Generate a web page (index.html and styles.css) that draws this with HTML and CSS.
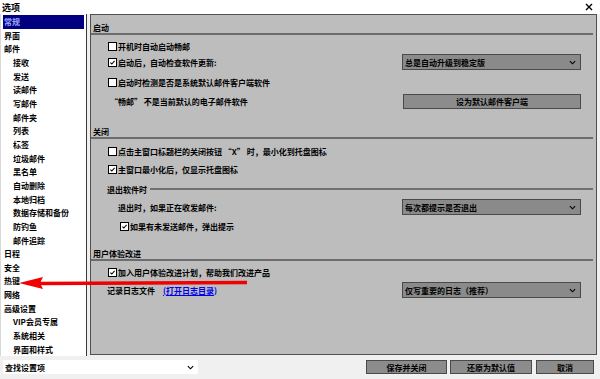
FILE: index.html
```html
<!DOCTYPE html>
<html lang="zh-CN">
<head>
  <meta charset="utf-8"/>
  <title>选项</title>
  <link rel="stylesheet" href="styles.css">
</head>
<body>
  <div class="titlebar">
    <span>选项</span>
    <svg class="close" width="8" height="8" viewBox="0 0 8 8"><path d="M1 1L7 7M7 1L1 7" stroke="#000" stroke-width="1.4"/></svg>
  </div>

  <div class="main">
    <ul class="nav">
      <li class="active">常规</li>
      <li>界面</li>
      <li>邮件</li>
      <li class="sub">接收</li>
      <li class="sub">发送</li>
      <li class="sub">读邮件</li>
      <li class="sub">写邮件</li>
      <li class="sub">邮件夹</li>
      <li class="sub">列表</li>
      <li class="sub">标签</li>
      <li class="sub">垃圾邮件</li>
      <li class="sub">黑名单</li>
      <li class="sub">自动删除</li>
      <li class="sub">本地归档</li>
      <li class="sub">数据存储和备份</li>
      <li class="sub">防钓鱼</li>
      <li class="sub">邮件追踪</li>
      <li>日程</li>
      <li>安全</li>
      <li>热键</li>
      <li>网络</li>
      <li>高级设置</li>
      <li class="sub">VIP会员专属</li>
      <li class="sub">系统相关</li>
      <li class="sub">界面和样式</li>
    </ul>

    <div class="panel">
      <div class="sec-head first">启动</div>
      <div class="row mt3"><span class="cb"></span>开机时自动启动畅邮</div>
      <div class="row">
        <span class="cb checked"><svg viewBox="0 0 9 9"><path d="M1.8 4.6L3.6 6.4L7.2 2.4" fill="none" stroke="#000" stroke-width="1.3"/></svg></span>启动后，自动检查软件更新:
        <div class="select"><span>总是自动升级到稳定版</span><svg viewBox="0 0 8 5"><path d="M1 1L4 4L7 1" fill="none" stroke="#000" stroke-width="1.3"/></svg></div>
      </div>
      <div class="row mt4"><span class="cb"></span>启动时检测是否是系统默认邮件客户端软件</div>
      <div class="row mt3 plain">
        “畅邮” 不是当前默认的电子邮件软件
        <div class="btn wide">设为默认邮件客户端</div>
      </div>

      <div class="sec-head second">关闭</div>
      <div class="row mt4"><span class="cb"></span>点击主窗口标题栏的关闭按钮 “X” 时，最小化到托盘图标</div>
      <div class="row mt2"><span class="cb checked"><svg viewBox="0 0 9 9"><path d="M1.8 4.6L3.6 6.4L7.2 2.4" fill="none" stroke="#000" stroke-width="1.3"/></svg></span>主窗口最小化后，仅显示托盘图标</div>

      <div class="sub-head">退出软件时</div>
      <div class="row mt4 deep">
        退出时，如果正在收发邮件:
        <div class="select"><span>每次都提示是否退出</span><svg viewBox="0 0 8 5"><path d="M1 1L4 4L7 1" fill="none" stroke="#000" stroke-width="1.3"/></svg></div>
      </div>
      <div class="row mt3 deep-cb"><span class="cb checked"><svg viewBox="0 0 9 9"><path d="M1.8 4.6L3.6 6.4L7.2 2.4" fill="none" stroke="#000" stroke-width="1.3"/></svg></span>如果有未发送邮件，弹出提示</div>

      <div class="sec-head third">用户体验改进</div>
      <div class="row mt3"><span class="cb checked"><svg viewBox="0 0 9 9"><path d="M1.8 4.6L3.6 6.4L7.2 2.4" fill="none" stroke="#000" stroke-width="1.3"/></svg></span>加入用户体验改进计划，帮助我们改进产品</div>
      <div class="row mt2 log">
        记录日志文件<a class="link" href="#">(打开日志目录)</a>
        <div class="select"><span>仅写重要的日志（推荐）</span><svg viewBox="0 0 8 5"><path d="M1 1L4 4L7 1" fill="none" stroke="#000" stroke-width="1.3"/></svg></div>
      </div>
    </div>
  </div>

  <div class="footer">
    <div class="search">
      <span>查找设置项</span>
      <svg viewBox="0 0 8 5"><path d="M1 1L4 4L7 1" fill="none" stroke="#000" stroke-width="1.3"/></svg>
    </div>
    <div class="actions">
      <div class="btn save">保存并关闭</div>
      <div class="btn reset">还原为默认值</div>
      <div class="btn cancel">取消</div>
    </div>
  </div>

  <!-- annotation arrow drawn over the window -->
  <svg class="arrow" width="600" height="379" viewBox="0 0 600 379">
    <line x1="38" y1="283.5" x2="247" y2="282.5" stroke="#f00000" stroke-width="3.5"/>
    <polygon points="19,283 43,277 40,283 43,289" fill="#f00000"/>
  </svg>
</body>
</html>
```

FILE: styles.css
```css
* {
  box-sizing: border-box;
}
body {
  margin: 0;
  width: 600px;
  height: 379px;
  overflow: hidden;
  position: relative;
  background-color: #f0f0f0;
  font-family: "Noto Sans CJK SC", "Noto Sans", sans-serif;
  font-size: 8px;
  font-weight: bold;
  color: #000;
}
.titlebar {
  height: 14px;
  background-color: #fff;
  display: flex;
  justify-content: space-between;
  align-items: center;
  padding: 0 7px 0 2px;
  font-size: 9px;
}
.close {
  width: 8px;
  height: 8px;
}
.main {
  display: flex;
  height: 342px;
}
.nav {
  width: 87px;
  margin: 0;
  padding: 1px 2px 0;
  list-style: none;
  background-color: #fff;
  border-left: 1px solid #d8d8d8;
  border-right: 1px solid #3a3a3a;
}
.nav li {
  height: 13.67px;
  line-height: 13.67px;
  padding-left: 1px;
  white-space: nowrap;
}
.nav li.sub {
  padding-left: 10px;
}
.nav li.active {
  background-color: #000080;
  color: #9fa8ff;
}
.panel {
  flex: 1;
  margin: 0 3px 1px 3px;
  border: 1px solid #505050;
  background-color: #bdbdbd;
}
.sec-head {
  height: 13px;
  line-height: 11px;
  margin-right: 3px;
  padding-left: 2px;
  border-bottom: 2px solid #6c6c6c;
}
.sec-head.first {
  margin-top: 7px;
}
.sec-head.second {
  margin-top: 17px;
}
.sec-head.third {
  margin-top: 14px;
}
.sub-head {
  display: flex;
  align-items: center;
  height: 12px;
  margin: 6px 3px 0 0;
  padding-left: 16px;
}
.sub-head::after {
  content: "";
  flex: 1;
  margin-left: 3px;
  border-top: 2px solid #707070;
}
.row {
  display: flex;
  align-items: center;
  height: 16px;
  padding-left: 17px;
  white-space: nowrap;
}
.row.plain {
  padding-left: 19px;
}
.row.deep {
  padding-left: 27px;
}
.row.deep-cb {
  padding-left: 29px;
}
.row.log {
  padding-left: 16px;
}
.mt2 {
  margin-top: 2px;
}
.mt3 {
  margin-top: 3px;
}
.mt4 {
  margin-top: 4px;
}
.cb {
  width: 9px;
  height: 9px;
  margin-right: 1px;
  border: 1px solid #000;
  background-color: #fff;
  display: flex;
}
.cb svg {
  width: 7px;
  height: 7px;
}
.select {
  margin-left: auto;
  margin-right: 15px;
  width: 179px;
  height: 16px;
  display: flex;
  align-items: center;
  justify-content: space-between;
  padding: 0 4px 0 2px;
  background-color: #8a8a8a;
  border: 1px solid #4a4a4a;
}
.select svg {
  width: 7px;
  height: 5px;
}
.btn {
  height: 15px;
  display: flex;
  align-items: center;
  justify-content: center;
  background-color: #8c8c8c;
  border: 1px solid #4a4a4a;
}
.btn.wide {
  margin-left: auto;
  margin-right: 15px;
  width: 178px;
}
.link {
  margin-left: 8px;
  color: #0000ee;
  text-decoration: underline;
}
.footer {
  display: flex;
  align-items: center;
  height: 23px;
  padding: 4px 6px 5px 3px;
}
.search {
  width: 195px;
  height: 14px;
  display: flex;
  align-items: center;
  justify-content: space-between;
  padding: 0 4px 0 2px;
  background-color: #fff;
}
.search svg {
  width: 7px;
  height: 5px;
}
.actions {
  margin-left: auto;
  display: flex;
}
.actions .btn {
  height: 14px;
}
.btn.save {
  width: 81px;
}
.btn.reset {
  width: 82px;
  margin-left: 3px;
}
.btn.cancel {
  width: 58px;
  margin-left: 4px;
}
.arrow {
  position: absolute;
  left: 0;
  top: 0;
  pointer-events: none;
}
```
